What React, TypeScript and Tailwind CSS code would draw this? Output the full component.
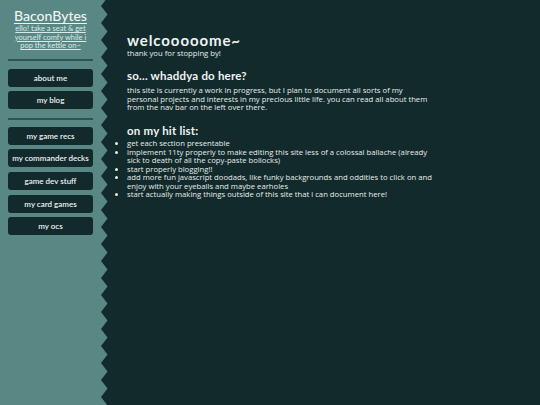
import React from "react";

const navTop = ["about me", "my blog"];
const navBottom = ["my game recs", "my commander decks", "game dev stuff", "my card games", "my ocs"];

function NavButton({ label }: { label: string }) {
  return (
    <a className="flex h-[18px] items-center justify-center rounded-[3px] bg-[#132a2c] text-[8px] font-semibold text-[#eef3f2]">
      {label}
    </a>
  );
}

export default function App() {
  return (
    <div
      className="flex h-screen w-full overflow-hidden bg-[#132a2c] text-[#e6ecea]"
      style={{ fontFamily: "Lato, 'Noto Sans', sans-serif" }}
    >
      <aside className="flex w-[101px] shrink-0 flex-col bg-[#598783] px-[8px] pt-[8px]">
        <a className="text-center text-[14px] font-medium leading-[16px] text-[#eef5f4] underline decoration-1 underline-offset-2">
          BaconBytes
        </a>
        <a className="mt-[1px] text-center text-[7.5px] leading-[8.5px] text-[#d9ebe8] underline decoration-[0.5px] underline-offset-1">
          ello! take a seat &amp; get yourself comfy while i pop the kettle on~
        </a>
        <div className="mt-[8px] h-[2px] bg-[#2d5553]" />
        <nav className="mt-[8px] flex flex-col gap-[4.7px]">
          {navTop.map((l) => (
            <NavButton key={l} label={l} />
          ))}
        </nav>
        <div className="mt-[8.5px] h-[2px] bg-[#2d5553]" />
        <nav className="mt-[7px] flex flex-col gap-[4.7px]">
          {navBottom.map((l) => (
            <NavButton key={l} label={l} />
          ))}
        </nav>
      </aside>
      <svg className="block h-full w-[7px] shrink-0" aria-hidden="true">
        <defs>
          <pattern id="zig" x="0" y="6" width="7" height="17" patternUnits="userSpaceOnUse">
            <polygon points="0,0 6.5,8.5 0,17" fill="#598783" />
          </pattern>
        </defs>
        <rect width="100%" height="100%" fill="url(#zig)" />
      </svg>
      <main className="flex-1 pl-[19px] pt-[31px]">
        <div className="w-[340px] text-[7.7px] leading-[8.5px]" style={{ fontFamily: "'Open Sans', Lato, sans-serif" }}>
          <h1 className="font-['Lato'] text-[15px] font-bold leading-[18px] tracking-[0.9px] text-[#eef3f2]">welcooooome~</h1>
          <p>thank you for stopping by!</p>
          <h2 className="mt-[11.5px] font-['Lato'] text-[11.5px] font-bold leading-[14px] tracking-[0.2px] text-[#eef3f2]">
            so... whaddya do here?
          </h2>
          <p className="mt-[3px]">
            this site is currently a work in progress, but I plan to document all sorts of my
            <br />
            personal projects and interests in my precious little life. you can read all about them
            <br />
            from the nav bar on the left over there.
          </p>
          <h2 className="mt-[12.5px] font-['Lato'] text-[11.5px] font-bold leading-[14px] tracking-[0.2px] text-[#eef3f2]">
            on my hit list:
          </h2>
          <ul className="mt-[1px] list-outside list-disc">
            <li>get each section presentable</li>
            <li>
              implement 11ty properly to make editing this site less of a colossal ballache (already
              <br />
              sick to death of all the copy-paste bollocks)
            </li>
            <li>start properly blogging!!</li>
            <li>
              add more fun javascript doodads, like funky backgrounds and oddities to click on and
              <br />
              enjoy with your eyeballs and maybe earholes
            </li>
            <li>start actually making things outside of this site that i can document here!</li>
          </ul>
        </div>
      </main>
    </div>
  );
}
